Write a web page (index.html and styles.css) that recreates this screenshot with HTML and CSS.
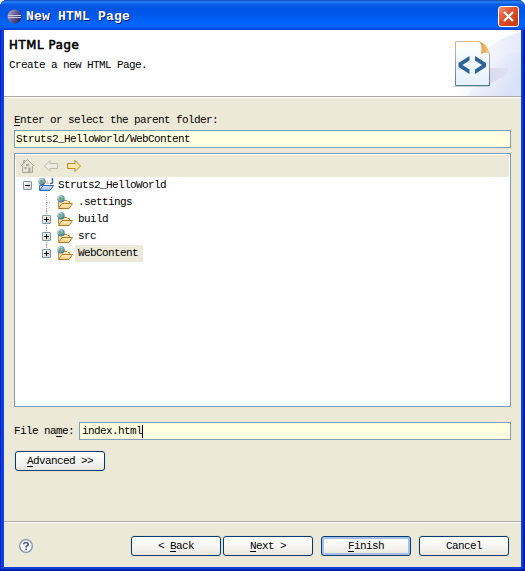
FILE: index.html
```html
<!DOCTYPE html>
<html lang="en">
<head>
<meta charset="utf-8">
<title>New HTML Page</title>
<link rel="stylesheet" href="styles.css">
</head>
<body>
<svg class="defs" width="0" height="0" aria-hidden="true">
  <defs>
    <radialGradient id="globe" cx=".35" cy=".3" r=".8"><stop offset="0" stop-color="#e4f2f6"/><stop offset=".5" stop-color="#79a9c6"/><stop offset="1" stop-color="#2f5b90"/></radialGradient>
    <linearGradient id="fold" x1="0" y1="0" x2="0" y2="1"><stop offset="0" stop-color="#fff0c8"/><stop offset="1" stop-color="#f5cf82"/></linearGradient>
    <linearGradient id="foldblue" x1="0" y1="0" x2="0" y2="1"><stop offset="0" stop-color="#e2f0ff"/><stop offset="1" stop-color="#86b2ec"/></linearGradient>
    <symbol id="folder" viewBox="0 0 16 16">
      <path d="M1.500 12.500V6.500H4L5 5.500H10L11 6.500H12.500V9" fill="#ffe9b4" stroke="#c98a35"/>
      <path d="M1.500 13.500L5 8.500H15.500L12 13.500Z" fill="url(#fold)" stroke="#b8751e"/>
      <circle cx="4" cy="3.700" r="3.700" fill="url(#globe)"/>
      <path d="M2 2.200Q4 .700 4.500 2.700T2.500 5.200ZM5 4.200L7 3.200L6 6.200Z" fill="#6cab5c"/>
    </symbol>
    <symbol id="project" viewBox="0 0 16 16">
      <path d="M1.500 12V7.500H12.500V9" fill="#fff" stroke="#4072b8"/>
      <path d="M1.500 12.500L5 7.500H15.500L12 12.500Z" fill="url(#foldblue)" stroke="#2f62b5"/>
      <circle cx="4" cy="3.500" r="3.700" fill="url(#globe)"/>
      <path d="M2 2.200Q4 .700 4.500 2.700T2.500 5.200ZM5 4.200L7 3.200L6 6.200Z" fill="#6cab5c"/>
      <path d="M8 6L10 3L11 6Z" fill="#e8b98c"/>
      <path d="M14.500 0V4.500Q14.500 5.500 13 5.500H12" fill="none" stroke="#315f9d" stroke-width="1.400"/>
    </symbol>
  </defs>
</svg>
<div class="window">
  <header class="titlebar">
    <svg class="logo" viewBox="0 0 15 15"><defs><linearGradient id="ecl" x1="0" x2="1" y2=".6"><stop offset="0" stop-color="#c3b0c4"/><stop offset=".5" stop-color="#6f659c"/><stop offset="1" stop-color="#2d2660"/></linearGradient></defs><circle cx="7.500" cy="7.500" r="7" fill="url(#ecl)"/><path d="M1 6.500H14M1 8.500H14" stroke="#c9cdf0"/></svg>
    <h1>New HTML Page</h1>
    <button class="close" aria-label="Close"><svg viewBox="0 0 19 19"><path d="M5 5L14 14M14 5L5 14" stroke="#fff" stroke-width="2.200"/></svg></button>
  </header>
  <main class="client">
    <section class="banner">
      <div class="intro">
        <h2>HTML Page</h2>
        <p>Create a new HTML Page.</p>
      </div>
      <svg class="art" viewBox="0 0 141 66">
        <defs>
          <linearGradient id="sky" x1="0" x2="1"><stop offset="0" stop-color="#fff"/><stop offset="1" stop-color="#e6ebf9"/></linearGradient>
          <linearGradient id="sky2" x1="0" x2="1" y2=".5"><stop offset="0" stop-color="#fff"/><stop offset="1" stop-color="#d9e1f6"/></linearGradient>
          <linearGradient id="sheet" x1="0" y1="0" x2="0" y2="1"><stop offset="0" stop-color="#fff"/><stop offset="1" stop-color="#e5f0fb"/></linearGradient>
          <linearGradient id="edge" x1="0" y1="0" x2="0" y2="1"><stop offset="0" stop-color="#dcb78b"/><stop offset=".5" stop-color="#8aa0b8"/><stop offset="1" stop-color="#507c8c"/></linearGradient>
          <linearGradient id="shade" x1="0" x2="1"><stop offset="0" stop-color="#b9b5cd"/><stop offset="1" stop-color="#d4d5eb" stop-opacity=".3"/></linearGradient>
          <linearGradient id="curl" x1="0" x2="1"><stop offset="0" stop-color="#e28c2f"/><stop offset="1" stop-color="#f8cf8c"/></linearGradient>
        </defs>
        <path d="M141 1Q112 11 95 30Q82 45 72 66H141Z" fill="url(#sky)"/>
        <path d="M141 21Q108 28 88 66H141Z" fill="url(#sky2)"/>
        <path d="M75 56L110 38H128V44L106 56Z" fill="url(#shade)"/>
        <path d="M73 56.500H110" stroke="#a9b1bd" stroke-opacity=".6"/>
        <path d="M75.500 11.500H100L109.500 23V55.500H75.500Z" fill="url(#sheet)" stroke="url(#edge)"/>
        <path d="M99 11.500Q108 14 109.500 24Q105 21 101 24Q103 15 99 11.500Z" fill="url(#curl)"/>
        <path d="M89.500 26V30.500L82.500 35L89.500 39.500V44L78.500 37V33ZM95 26V30.500L102 35L95 39.500V44L106 37V33Z" fill="#2c6498"/>
      </svg>
    </section>
    <section class="form">
      <label class="folder-label"><u>E</u>nter or select the parent folder:</label>
      <div class="field path">Struts2_HelloWorld/WebContent</div>
      <div class="browser">
        <div class="toolbar">
          <svg viewBox="0 0 16 16"><path d="M2.500 8V14.500H12.500V8M1 8L7.500 1.500L14 8M3.500 5V2.500H5V4" fill="#e2dfd3" stroke="#aaa799"/><path d="M6 6H9V8H6ZM4.500 9H6.500V11H4.500ZM8.500 9.500H10.500V14H8.500Z" fill="#aaa799"/></svg>
          <svg viewBox="0 0 16 16"><path d="M1.500 8L7 2.500V5.500H14.500V10.500H7V13.500Z" fill="#eeece5" stroke="#bcb9ad" stroke-linejoin="round"/></svg>
          <svg viewBox="0 0 16 16"><path d="M14.500 8L9 2.500V5.500H1.500V10.500H9V13.500Z" fill="#ffe9aa" stroke="#c68716" stroke-linejoin="round"/></svg>
        </div>
        <ul class="tree">
          <li class="root"><span class="box"></span><svg class="icon"><use href="#project"/></svg><span class="name">Struts2_HelloWorld</span></li>
          <li class="leaf"><span class="line"></span><svg class="icon"><use href="#folder"/></svg><span class="name">.settings</span></li>
          <li><span class="box plus"></span><svg class="icon"><use href="#folder"/></svg><span class="name">build</span></li>
          <li><span class="box plus"></span><svg class="icon"><use href="#folder"/></svg><span class="name">src</span></li>
          <li class="last"><span class="box plus"></span><svg class="icon"><use href="#folder"/></svg><span class="name selected">WebContent</span></li>
        </ul>
      </div>
      <div class="file-row">
        <label>File na<u>m</u>e:</label>
        <div class="field file">index.html<span class="caret"></span></div>
      </div>
      <button class="btn"><u>A</u>dvanced &gt;&gt;</button>
    </section>
    <footer class="actions">
      <svg class="help" viewBox="0 0 14 14"><circle cx="7" cy="7" r="6.300" fill="#fff" stroke="#8190b0" stroke-width="1.300"/><path d="M4.800 5.400Q4.800 3.500 7 3.500T9.200 5.400Q9.200 6.400 7.200 7.400V8.500M7.200 9.500V11" fill="none" stroke="#4a5c87" stroke-width="1.700"/></svg>
      <button class="btn">&lt; <u>B</u>ack</button>
      <button class="btn next"><u>N</u>ext &gt;</button>
      <button class="btn default"><u>F</u>inish</button>
      <button class="btn cancel">Cancel</button>
    </footer>
  </main>
</div>
</body>
</html>
```
FILE: styles.css
```css
* { box-sizing: border-box; }
body { margin: 0; background: #fff; color: #000; font: 11px/14px "Liberation Mono", monospace; letter-spacing: -.6px; overflow: hidden; }
h1, h2, p, ul { margin: 0; padding: 0; }
u { text-underline-offset: 2px; text-decoration-thickness: 1px; }
.defs { position: absolute; }
.window { width: 525px; height: 571px; display: flex; flex-direction: column; padding: 0 4px 4px; background: #0842d8; border-radius: 7px 7px 0 0; box-shadow: inset 1px 0 #0019cf, inset -2px 0 #001ea0, inset 0 -2px #001ea0; }
.titlebar { height: 30px; margin: 0 -4px; padding: 3px 6px 0 7px; display: flex; align-items: center; border-radius: 7px 7px 0 0; background: linear-gradient(#0a48c2 0, #2b83f5 2px, #0a5fe6 4px, #0054e3 8px, #0058ea 15px, #0066ff 24px, #0062f5 27px, #003dd0 30px); }
.logo { width: 15px; height: 15px; margin-top: -1px; }
.titlebar h1 { flex: 1; margin-left: 4px; color: #fff; font: bold 13px/18px "Liberation Mono", monospace; letter-spacing: .2px; text-shadow: 1px 1px #0a1883; }
.close { width: 21px; height: 21px; padding: 0; border: 1px solid #fff; border-radius: 3px; background: linear-gradient(135deg, #ee9475, #df4f2a 45%, #c5380f); }
.close svg { display: block; width: 19px; height: 19px; }
.client { flex: 1; display: flex; flex-direction: column; background: #ece9d8; }
.banner { height: 67px; display: flex; justify-content: space-between; background: #fff; border-bottom: 1px solid #aca899; box-shadow: 0 1px #fff; }
.intro { padding: 7px 0 0 5px; }
.intro h2 { font: 13px/16px "DejaVu Sans Condensed", "DejaVu Sans", sans-serif; letter-spacing: .65px; -webkit-text-stroke: .6px #000; }
.intro p { margin-top: 5px; }
.art { width: 141px; height: 66px; }
.form { flex: 1; display: flex; flex-direction: column; align-items: flex-start; padding: 16px 10px 0; }
.field { border: 1px solid #7f9db9; background: #ffffe1; height: 18px; padding: 2px 1px; line-height: 13px; }
.folder-label { height: 17px; }
.path { width: 497px; }
.browser { width: 497px; height: 254px; margin-top: 5px; padding: 1px; border: 1px solid #7f9db9; background: #fff; }
.toolbar { height: 22px; padding: 3px 4px; display: flex; gap: 7px; background: #ece9d8; }
.toolbar svg { width: 16px; height: 16px; }
.tree { list-style: none; }
.tree li { height: 17px; display: flex; align-items: center; padding-left: 26px; background: repeating-linear-gradient(#aca899 0 1px, transparent 1px 2px) 30px 0 / 1px 17px no-repeat; }
.tree .root { padding-left: 7px; background: none; }
.tree .root .name { margin-left: 1px; }
.tree .last { background-size: 1px 9px; }
.box { width: 9px; height: 9px; border: 1px solid #7898b5; border-radius: 1px; background: linear-gradient(#000, #000) 1px 3px / 5px 1px no-repeat, linear-gradient(135deg, #fff, #d4cfc0); }
.plus { background: linear-gradient(#000, #000) 1px 3px / 5px 1px no-repeat, linear-gradient(#000, #000) 3px 1px / 1px 5px no-repeat, linear-gradient(135deg, #fff, #d4cfc0); }
.line { width: 9px; height: 1px; background: repeating-linear-gradient(90deg, transparent 0 1px, #aca899 1px 2px) 4px 0 / 5px 1px no-repeat; }
.icon { width: 16px; height: 16px; margin-left: 6px; }
.name { margin-left: 2px; padding: 1px 5px 2px 3px; height: 17px; }
.selected { background: #ece9d8; }
.file-row { width: 497px; margin-top: 15px; display: flex; align-items: center; gap: 5px; }
.file-row label { width: 60px; white-space: nowrap; }
.file { flex: 1; display: flex; padding-left: 2px; }
.caret { width: 1px; height: 13px; margin-left: 0; background: #000; }
.btn { width: 90px; height: 20px; padding: 0; border: 1px solid #003c74; border-radius: 3px; background: linear-gradient(#fff, #f5f4ef 60%, #e8e5dc); box-shadow: 0 0 0 1px #e5e1cf; color: #000; font: inherit; letter-spacing: inherit; }
.form .btn { margin: 11px 0 0 1px; }
.actions { height: 46px; display: flex; align-items: center; padding: 2px 12px 0 15px; border-top: 1px solid #aca899; box-shadow: inset 0 1px #fff; }
.help { width: 14px; height: 14px; margin-right: auto; }
.next { margin-left: 2px; }
.default { margin-left: 8px; box-shadow: inset 0 0 0 2px #a5bff0; }
.cancel { margin-left: 8px; }
```
